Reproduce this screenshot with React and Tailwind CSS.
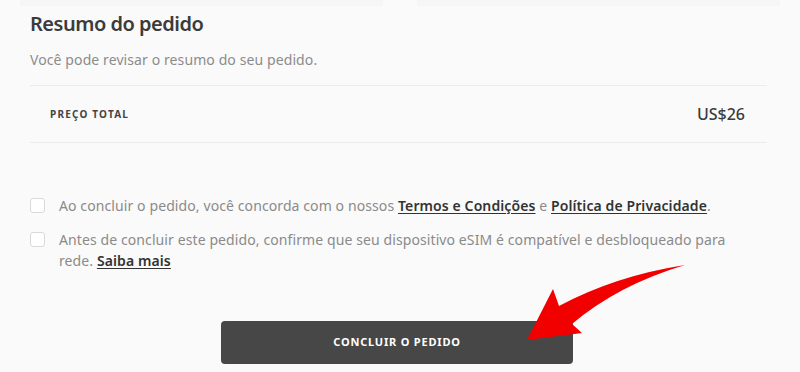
export default function App() {
  return (
    <div className="relative w-[800px] h-[372px] overflow-hidden bg-[#fafafa] text-[#333]" style={{ fontFamily: '"Noto Sans", "Open Sans", sans-serif' }}>
      <div className="flex gap-[34px] px-[20px]">
        <div className="h-[6px] flex-1 bg-[#f6f6f6]" />
        <div className="h-[6px] flex-1 bg-[#f6f6f6]" />
      </div>
      <div className="pl-[30px] pr-[33px]">
        <h2 className="mt-[4px] text-[20px] leading-[28px] font-semibold text-[#3b3b3b] tracking-[-0.5px]">Resumo do pedido</h2>
        <p className="mt-[12px] text-[14px] leading-[20px] text-[#8c8c8c] tracking-[0.1px]">Você pode revisar o resumo do seu pedido.</p>
        <div className="mt-[15px] border-t border-b border-[#ececec] h-[58px] flex items-center justify-between pl-[20px] pr-[22px]">
          <span className="text-[10px] font-bold tracking-[1.2px] text-[#444]">PREÇO TOTAL</span>
          <span className="text-[16px] font-medium text-[#3b3b3b]">US$26</span>
        </div>
        <div className="mt-[52px] flex flex-col gap-[13px] text-[14px] leading-[21px] text-[#8a8a8a] tracking-[0.1px]">
          <label className="flex gap-[14px] items-start">
            <span className="mt-[3px] w-[15px] h-[15px] shrink-0 rounded-[3px] border border-[#d9d9d9] bg-white" />
            <span>
              Ao concluir o pedido, você concorda com o nossos{' '}
              <a className="font-semibold text-[#333] underline underline-offset-2">Termos e Condições</a> e{' '}
              <a className="font-semibold text-[#333] underline underline-offset-2">Política de Privacidade</a>.
            </span>
          </label>
          <label className="flex gap-[14px] items-start">
            <span className="mt-[3px] w-[15px] h-[15px] shrink-0 rounded-[3px] border border-[#d9d9d9] bg-white" />
            <span className="max-w-[685px]">
              Antes de concluir este pedido, confirme que seu dispositivo eSIM é compatível e desbloqueado para rede.{' '}
              <a className="font-semibold text-[#333] underline underline-offset-2">Saiba mais</a>
            </span>
          </label>
        </div>
        <div className="mt-[50px] flex justify-center pr-[3px]">
          <button className="w-[352px] h-[43px] rounded-[4px] bg-[#474747] text-white text-[11px] font-bold tracking-[0.8px]">CONCLUIR O PEDIDO</button>
        </div>
      </div>
      <svg className="absolute left-0 top-0 pointer-events-none" width="800" height="372" viewBox="0 0 800 372">
        <path
          d="M 685 265 Q 615 276 559 306 L 553 289 L 527 340 L 582 333 L 572 324 Q 618 285 685 265 Z"
          fill="#f20000"
        />
      </svg>
    </div>
  );
}
